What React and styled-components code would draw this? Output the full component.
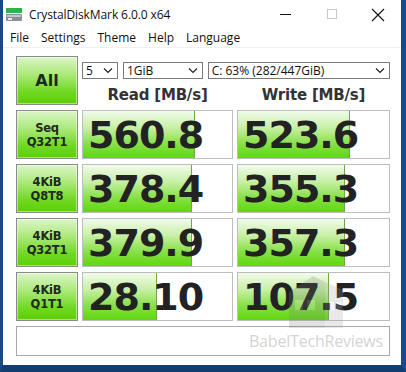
import React from "react";
import styled, { createGlobalStyle } from "styled-components";

const GlobalStyle = createGlobalStyle`
  html, body { margin: 0; padding: 0; background: #0d2f57; }
  #root { width: 406px; height: 372px; }
`;

const Frame = styled.div`
  position: relative;
  box-sizing: border-box;
  width: 406px;
  height: 372px;
  display: flex;
  flex-direction: column;
  background: #ffffff;
  border-left: 3px solid #184a86;
  border-right: 5px solid #184a86;
  border-bottom: 7px solid #123d70;
  padding-top: 1px;
  font-family: "Open Sans", "Noto Sans", sans-serif;
`;

const TitleBar = styled.div`
  height: 27px;
  display: flex;
  align-items: center;
  padding-left: 2px;
  font-size: 12px;
  color: #111;
`;

const Title = styled.span`
  margin-left: 6px;
  flex: 1;
  letter-spacing: -0.1px;
`;

const WinButton = styled.div`
  width: 46px;
  height: 27px;
  display: flex;
  align-items: center;
  justify-content: center;
`;

const MenuBar = styled.div`
  height: 19px;
  display: flex;
  align-items: center;
  padding-left: 1px;
  font-size: 12px;
  color: #111;
  border-bottom: 1px solid #f0f0f0;
`;

const MenuItem = styled.span`
  padding: 0 6px;
`;

const Content = styled.div`
  flex: 1;
  display: grid;
  grid-template-columns: 62px 151px 153px;
  grid-template-rows: 49px repeat(4, 49px) 30px;
  column-gap: 4px;
  row-gap: 5px;
  padding: 8px 0 0 13px;
`;

const GreenButton = styled.div`
  box-sizing: border-box;
  border: 1px solid #8a8a8a;
  box-shadow: inset 0 0 0 1px rgba(255, 255, 255, 0.45);
  background: linear-gradient(to bottom, #dcf6c8 0%, #a7e873 40%, #6fd822 75%, #5ccf04 100%);
  display: flex;
  align-items: center;
  justify-content: center;
  text-align: center;
  font-family: "DejaVu Sans", Verdana, sans-serif;
  font-weight: bold;
  color: #1e2a1e;
  font-size: ${(p) => (p.$big ? "16px" : "11.5px")};
  line-height: 14px;
  letter-spacing: ${(p) => (p.$big ? "0" : "-0.2px")};
`;

const TopRight = styled.div`
  grid-column: 2 / 4;
  display: flex;
  flex-direction: column;
`;

const SelectRow = styled.div`
  display: flex;
  gap: 5px;
  margin-top: 6px;
`;

const Select = styled.div`
  box-sizing: border-box;
  width: ${(p) => p.$w}px;
  height: 17px;
  border: 1px solid #7a7a7a;
  display: flex;
  align-items: center;
  justify-content: space-between;
  padding: 0 4px 0 3px;
  font-size: 12px;
  color: #111;
  background: #fff;
`;

const Headers = styled.div`
  display: grid;
  grid-template-columns: 151px 153px;
  column-gap: 4px;
  margin-top: 7px;
`;

const Header = styled.div`
  text-align: center;
  font-family: "DejaVu Sans", Verdana, sans-serif;
  font-weight: bold;
  font-size: 15px;
  color: #333;
  letter-spacing: -0.2px;
`;

const ValueBox = styled.div`
  position: relative;
  box-sizing: border-box;
  border: 1px solid #bdbdbd;
  background: #fff;
  overflow: hidden;
  display: flex;
  align-items: center;
`;

const Bar = styled.div`
  position: absolute;
  left: 0;
  top: 0;
  bottom: 0;
  background: linear-gradient(to bottom, #f2fbec 0%, #c8f0a6 35%, #86e046 70%, #5fd80e 100%);
  border-right: 1px solid #6aa84a;
`;

const Value = styled.span`
  position: relative;
  padding-left: 5px;
  font-family: "DejaVu Sans", Verdana, sans-serif;
  font-weight: bold;
  font-size: 38px;
  letter-spacing: -1px;
  color: #222;
  line-height: 1;
`;

const Comment = styled.div`
  grid-column: 1 / 4;
  box-sizing: border-box;
  border: 1px solid #a8a8a8;
  background: #fff;
  display: flex;
  align-items: flex-end;
  justify-content: flex-end;
  padding: 0 6px 3px 0;
`;

const Watermark = styled.span`
  font-family: "Open Sans", sans-serif;
  font-size: 16px;
  color: #d4d4d4;
  letter-spacing: -0.2px;
`;

const Logo = styled.svg`
  position: absolute;
  left: 282px;
  top: 272px;
  opacity: 0.22;
  pointer-events: none;
`;

const Chevron = () => (
  <svg width="10" height="7" viewBox="0 0 10 7">
    <path d="M1 1.5 L5 5.5 L9 1.5" fill="none" stroke="#222" strokeWidth="1.2" />
  </svg>
);

const AppIcon = () => (
  <svg width="18" height="15" viewBox="0 0 18 15">
    <rect x="1" y="1" width="16" height="5" fill="#34b04a" />
    <rect x="1" y="7" width="16" height="7" rx="1" fill="#8a8f96" />
    <rect x="2" y="8" width="14" height="2" fill="#c2c6cc" />
    <rect x="3" y="11" width="4" height="2" fill="#e8e8e8" />
  </svg>
);

const rows = [
  { l1: "Seq", l2: "Q32T1", read: "560.8", rw: 111, write: "523.6", ww: 111 },
  { l1: "4KiB", l2: "Q8T8", read: "378.4", rw: 108, write: "355.3", ww: 106 },
  { l1: "4KiB", l2: "Q32T1", read: "379.9", rw: 108, write: "357.3", ww: 106 },
  { l1: "4KiB", l2: "Q1T1", read: "28.10", rw: 73, write: "107.5", ww: 90 },
];

export default function App() {
  return (
    <>
      <GlobalStyle />
      <Frame>
        <TitleBar>
          <AppIcon />
          <Title>CrystalDiskMark 6.0.0 x64</Title>
          <WinButton>
            <svg width="12" height="2"><rect width="11" height="1" fill="#111" /></svg>
          </WinButton>
          <WinButton>
            <svg width="11" height="11"><rect x="0.5" y="0.5" width="9" height="9" fill="none" stroke="#c8c8c8" /></svg>
          </WinButton>
          <WinButton>
            <svg width="14" height="14" viewBox="0 0 14 14">
              <path d="M1 1 L13 13 M13 1 L1 13" stroke="#111" strokeWidth="1.1" />
            </svg>
          </WinButton>
        </TitleBar>
        <MenuBar>
          {["File", "Settings", "Theme", "Help", "Language"].map((m) => (
            <MenuItem key={m}>{m}</MenuItem>
          ))}
        </MenuBar>
        <Content>
          <GreenButton $big>All</GreenButton>
          <TopRight>
            <SelectRow>
              <Select $w={36}>5<Chevron /></Select>
              <Select $w={80}>1GiB<Chevron /></Select>
              <Select $w={183}>C: 63% (282/447GiB)<Chevron /></Select>
            </SelectRow>
            <Headers>
              <Header>Read [MB/s]</Header>
              <Header>Write [MB/s]</Header>
            </Headers>
          </TopRight>
          {rows.map((r, i) => (
            <React.Fragment key={i}>
              <GreenButton>
                {r.l1}
                <br />
                {r.l2}
              </GreenButton>
              <ValueBox>
                <Bar style={{ width: r.rw }} />
                <Value>{r.read}</Value>
              </ValueBox>
              <ValueBox>
                <Bar style={{ width: r.ww }} />
                <Value>{r.write}</Value>
              </ValueBox>
            </React.Fragment>
          ))}
          <Comment>
            <Watermark>BabelTechReviews</Watermark>
          </Comment>
        </Content>
        <Logo width="62" height="56" viewBox="0 0 62 56">
          <path d="M4 20 L28 4 L40 10 L40 56 L4 56 Z" fill="#7a7a7a" />
          <path d="M40 10 L58 18 L58 56 L40 56 Z" fill="#a0a0a0" />
          <rect x="10" y="28" width="8" height="10" fill="#d8d8d8" />
          <rect x="22" y="28" width="8" height="10" fill="#d8d8d8" />
          <rect x="44" y="30" width="5" height="8" fill="#e0e0e0" />
          <rect x="51" y="30" width="5" height="8" fill="#e0e0e0" />
        </Logo>
      </Frame>
    </>
  );
}
